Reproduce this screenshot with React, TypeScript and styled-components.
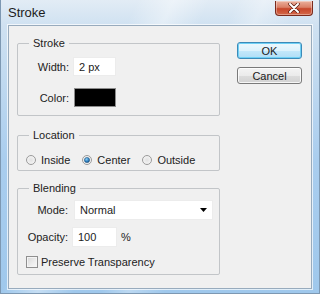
import styled, { createGlobalStyle } from 'styled-components';

const GlobalStyle = createGlobalStyle`
  html, body {
    margin: 0;
    padding: 0;
    background: #ffffff;
  }
  body {
    font-family: "Liberation Sans", Arial, sans-serif;
    font-size: 11px;
    color: #222222;
  }
`;

const Window = styled.div`
  width: 320px;
  height: 294px;
  box-sizing: border-box;
  display: flex;
  flex-direction: column;
  border: 1px solid #7d98b2;
  border-top: none;
  background:
    linear-gradient(115deg, rgba(255, 255, 255, 0) 30%, rgba(255, 255, 255, 0.4) 38%, rgba(255, 255, 255, 0) 46%),
    linear-gradient(115deg, rgba(255, 255, 255, 0) 52%, rgba(255, 255, 255, 0.3) 58%, rgba(255, 255, 255, 0) 66%),
    linear-gradient(to bottom, #e2ecf5 0%, #cfe1f1 9%, #a9cdee 55%, #9fc8ec 100%);
`;

const TitleBar = styled.div`
  height: 25px;
  flex: none;
  display: flex;
  align-items: flex-start;
  justify-content: space-between;
  padding: 0 6px 0 7px;
`;

const Title = styled.span`
  font-family: "Liberation Sans", Arial, sans-serif;
  font-weight: 400;
  font-size: 13px;
  line-height: 14px;
  margin-top: 6px;
  color: #1c1c1c;
`;

const CloseButton = styled.div`
  width: 38px;
  height: 15px;
  margin-top: 1px;
  box-sizing: border-box;
  display: flex;
  align-items: center;
  justify-content: center;
  border: 1px solid #7a2a1c;
  border-top: none;
  border-radius: 0 0 4px 4px;
  background: linear-gradient(to bottom, #eab09c 0%, #da7f66 45%, #c7462a 55%, #d4694a 100%);
  box-shadow: inset 0 0 0 1px rgba(255, 255, 255, 0.35);
`;

const Client = styled.div`
  flex: 1;
  margin: 0 7px 4px 7px;
  display: flex;
  box-sizing: border-box;
  background: #f0f0f0;
  border: 1px solid #98abbd;
  box-shadow: 0 0 0 1px rgba(255, 255, 255, 0.7);
`;

const LeftColumn = styled.div`
  width: 203px;
  padding: 17px 0 0 8px;
  display: flex;
  flex-direction: column;
`;

const Group = styled.div<{ $height: number; $gap: number }>`
  position: relative;
  height: ${({ $height }) => $height}px;
  margin-bottom: ${({ $gap }) => $gap}px;
  box-sizing: border-box;
  border: 1px solid #c2c5c8;
  border-radius: 2px;
`;

const Legend = styled.span`
  position: absolute;
  top: -8px;
  left: 11px;
  padding: 0 4px;
  background: #f0f0f0;
  line-height: 14px;
`;

const FieldGrid = styled.div<{ $top: number; $rowGap: number; $labelWidth: number }>`
  display: grid;
  grid-template-columns: ${({ $labelWidth }) => $labelWidth}px auto;
  column-gap: 4px;
  row-gap: ${({ $rowGap }) => $rowGap}px;
  padding-top: ${({ $top }) => $top}px;
  align-items: center;
`;

const Label = styled.span`
  text-align: right;
  line-height: 14px;
`;

const Field = styled.div<{ $width: number; $height: number; $offset?: number }>`
  width: ${({ $width }) => $width}px;
  height: ${({ $height }) => $height}px;
  margin-left: ${({ $offset }) => $offset ?? 0}px;
  box-sizing: border-box;
  background: #ffffff;
  border: 1px solid #ececec;
  display: flex;
  align-items: center;
  padding-left: 5px;
  line-height: 14px;
`;

const Swatch = styled.div`
  width: 42px;
  height: 19px;
  margin-left: 1px;
  box-sizing: border-box;
  background: #000000;
  border: 1px solid #8c8c8c;
`;

const InlineRow = styled.div`
  display: flex;
  align-items: center;
  gap: 4px;
`;

const SelectBox = styled(Field)`
  justify-content: space-between;
  padding-right: 5px;
`;

const RadioRow = styled.div`
  display: flex;
  align-items: center;
  padding: 17px 0 0 8px;
`;

const Option = styled.label`
  display: flex;
  align-items: center;
  gap: 5px;
  margin-right: 12px;
  line-height: 14px;
`;

const CheckRow = styled.label`
  grid-column: 1 / span 2;
  display: flex;
  align-items: center;
  gap: 3px;
  padding-left: 8px;
  margin-top: 1px;
  line-height: 14px;
`;

const CheckBox = styled.span`
  width: 12px;
  height: 12px;
  box-sizing: border-box;
  border: 1px solid #8f8f8f;
  background: linear-gradient(135deg, #d6d6d6 0%, #eeeeee 60%, #f8f8f8 100%);
  box-shadow: inset 0 0 0 1px #f4f4f4;
`;

const RightColumn = styled.div`
  margin-left: 17px;
  padding-top: 16px;
  display: flex;
  flex-direction: column;
  gap: 8px;
`;

const Button = styled.div<{ $primary?: boolean }>`
  width: 65px;
  height: 17px;
  box-sizing: border-box;
  display: flex;
  align-items: center;
  justify-content: center;
  border-radius: 3px;
  line-height: 14px;
  color: #1a1a1a;
  border: 1px solid ${({ $primary }) => ($primary ? '#3c8ab8' : '#7a7a7a')};
  background: ${({ $primary }) =>
    $primary
      ? 'linear-gradient(to bottom, #eef8fd 0%, #ddf2fc 50%, #c4e8fb 51%, #b0def6 100%)'
      : 'linear-gradient(to bottom, #f4f4f4 0%, #ebebeb 50%, #dddddd 51%, #d2d2d2 100%)'};
  box-shadow: ${({ $primary }) =>
    $primary ? 'inset 0 0 0 1px #6fd0f5' : 'inset 0 0 0 1px rgba(255, 255, 255, 0.8)'};
`;

const Radio = ({ checked }: { checked?: boolean }) => (
  <svg width="10" height="10" viewBox="0 0 10 10">
    <defs>
      <radialGradient id={checked ? 'rOn' : 'rOff'} cx="0.5" cy="0.5" r="0.6">
        <stop offset="0" stopColor="#e2e2e2" />
        <stop offset="1" stopColor="#f8f8f8" />
      </radialGradient>
      <radialGradient id="rDot" cx="0.4" cy="0.35" r="0.7">
        <stop offset="0" stopColor="#8fd0f6" />
        <stop offset="0.6" stopColor="#2f82c2" />
        <stop offset="1" stopColor="#174f80" />
      </radialGradient>
    </defs>
    <circle cx="5" cy="5" r="4.5" fill={`url(#${checked ? 'rOn' : 'rOff'})`} stroke="#9a9a9a" strokeWidth="1" />
    {checked && <circle cx="5" cy="5" r="2.6" fill="url(#rDot)" stroke="#1d4e78" strokeWidth="0.5" />}
  </svg>
);

export default function App() {
  return (
    <>
      <GlobalStyle />
      <Window>
        <TitleBar>
          <Title>Stroke</Title>
          <CloseButton>
            <svg width="12" height="10" viewBox="0 0 12 10">
              <path d="M2 1 L10 9 M10 1 L2 9" stroke="#5a1a10" strokeWidth="3.4" strokeLinecap="round" />
              <path d="M2 1 L10 9 M10 1 L2 9" stroke="#ffffff" strokeWidth="2" strokeLinecap="round" />
            </svg>
          </CloseButton>
        </TitleBar>
        <Client>
          <LeftColumn>
            <Group $height={73} $gap={19}>
              <Legend>Stroke</Legend>
              <FieldGrid $top={13} $rowGap={12} $labelWidth={51}>
                <Label>Width:</Label>
                <Field $width={43} $height={19}>2 px</Field>
                <Label>Color:</Label>
                <Swatch />
              </FieldGrid>
            </Group>
            <Group $height={36} $gap={17}>
              <Legend>Location</Legend>
              <RadioRow>
                <Option>
                  <Radio />
                  Inside
                </Option>
                <Option>
                  <Radio checked />
                  Center
                </Option>
                <Option>
                  <Radio />
                  Outside
                </Option>
              </RadioRow>
            </Group>
            <Group $height={87} $gap={0}>
              <Legend>Blending</Legend>
              <FieldGrid $top={11} $rowGap={7} $labelWidth={50}>
                <Label>Mode:</Label>
                <SelectBox $width={139} $height={20} $offset={2}>
                  Normal
                  <svg width="7" height="4" viewBox="0 0 7 4">
                    <path d="M0 0 H7 L3.5 4 Z" fill="#000000" />
                  </svg>
                </SelectBox>
                <Label>Opacity:</Label>
                <InlineRow>
                  <Field $width={45} $height={20}>100</Field>
                  <span>%</span>
                </InlineRow>
                <CheckRow>
                  <CheckBox />
                  Preserve Transparency
                </CheckRow>
              </FieldGrid>
            </Group>
          </LeftColumn>
          <RightColumn>
            <Button $primary>OK</Button>
            <Button>Cancel</Button>
          </RightColumn>
        </Client>
      </Window>
    </>
  );
}
